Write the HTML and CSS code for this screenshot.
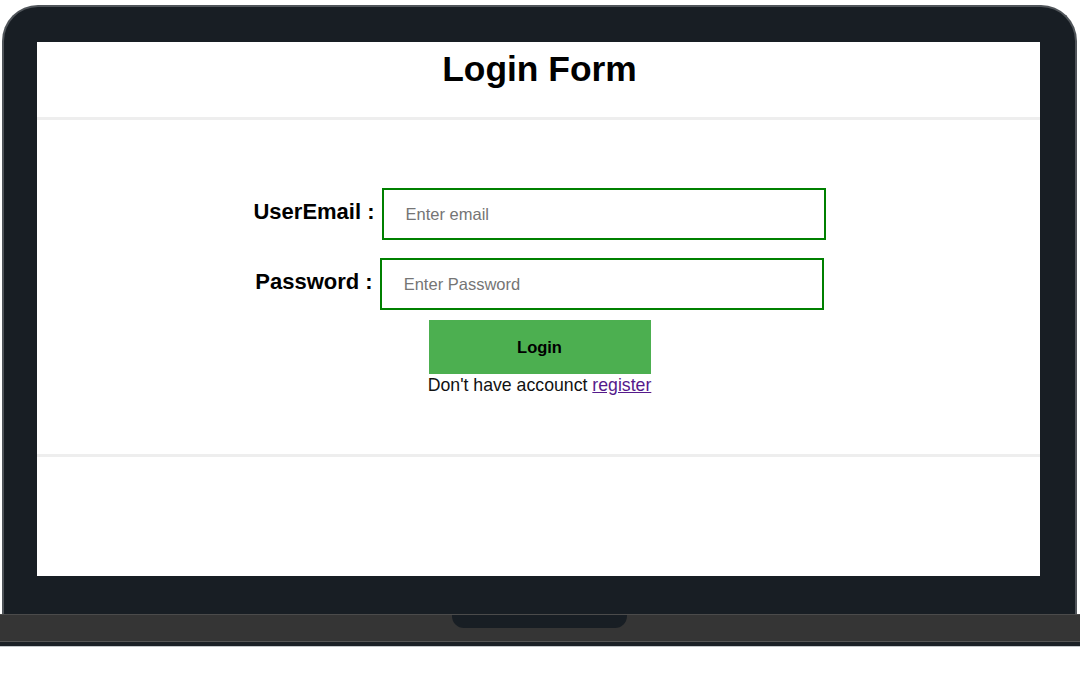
FILE: index.html
```html
<!DOCTYPE html>
<html lang="en">
<head>
<meta charset="utf-8">
<title>Login Form</title>
<link rel="stylesheet" href="styles.css">
</head>
<body>
<div class="laptop">
  <div class="frame">
    <div class="screen">
      <header class="top">
        <h1 class="title">Login Form</h1>
      </header>
      <div class="rule"></div>
      <form class="form">
        <div class="row">
          <label class="label" for="email">UserEmail :</label>
          <input class="field" id="email" type="text" placeholder="Enter email">
        </div>
        <div class="row row-second">
          <label class="label" for="pass">Password :</label>
          <input class="field" id="pass" type="password" placeholder="Enter Password">
        </div>
        <div class="actions">
          <button class="btn" type="button">Login</button>
          <p class="note">Don't have accounct <a class="link" href="#">register</a></p>
        </div>
      </form>
      <div class="rule"></div>
    </div>
  </div>
  <div class="base">
    <div class="notch"></div>
  </div>
  <div class="foot"></div>
</div>
</body>
</html>
```

FILE: styles.css
```css
* { box-sizing: border-box; }

html, body {
  margin: 0;
  padding: 0;
  background: #ffffff;
  font-family: "Liberation Sans", Arial, sans-serif;
}

.laptop {
  width: 1080px;
  display: flex;
  flex-direction: column;
}

.frame {
  margin: 5px 0 0 2px;
  width: 1075px;
  background: #181e24;
  border: 2px solid #50555a;
  border-bottom: none;
  border-radius: 36px 36px 0 0;
  padding: 35px 35px 38px 33px;
}

.screen {
  width: 1003px;
  height: 534px;
  background: #ffffff;
  overflow: hidden;
  display: flex;
  flex-direction: column;
  padding-left: 2px;
}

.top {
  height: 75px;
  padding-top: 7px;
}

.title {
  margin: 0;
  text-align: center;
  font-size: 35.4px;
  font-weight: bold;
  color: #000;
  line-height: normal;
}

.rule {
  height: 3px;
  background: #eeeeee;
  margin-left: -2px;
}

.form {
  height: 334px;
  padding-top: 68px;
  display: flex;
  flex-direction: column;
}

.row {
  display: flex;
  justify-content: center;
  align-items: center;
  gap: 7px;
}

.row-second {
  margin-top: 18px;
}

.label {
  font-size: 22px;
  font-weight: bold;
  color: #000;
  margin-bottom: 4px;
}

.field {
  width: 444px;
  height: 52px;
  border: 2px solid #008000;
  padding: 0 0 0 22px;
  font-family: "Liberation Sans", Arial, sans-serif;
  font-size: 16.5px;
  color: #000;
  background: #fff;
  outline: none;
}

.field::placeholder {
  color: #757575;
}

.actions {
  margin-top: 10px;
  display: flex;
  flex-direction: column;
  align-items: center;
}

.btn {
  width: 222px;
  height: 54px;
  border: none;
  background: #4caf50;
  font-family: "Liberation Sans", Arial, sans-serif;
  font-size: 16.5px;
  font-weight: bold;
  color: #000;
}

.note {
  margin: 1px 0 0;
  font-size: 17.7px;
  color: #111;
  line-height: normal;
}

.link {
  color: #551a8b;
  text-decoration: underline;
}

.base {
  height: 28px;
  background: #353535;
  border-top: 1px solid #4b4b4b;
  border-bottom: 1px solid #555555;
  display: flex;
  justify-content: center;
}

.notch {
  width: 175px;
  height: 13px;
  background: #181e24;
  border-radius: 0 0 12px 12px;
  margin-left: -1px;
}

.foot {
  height: 5px;
  background: #1b2026;
  border-bottom: 1px solid #c3c7cb;
}
```
